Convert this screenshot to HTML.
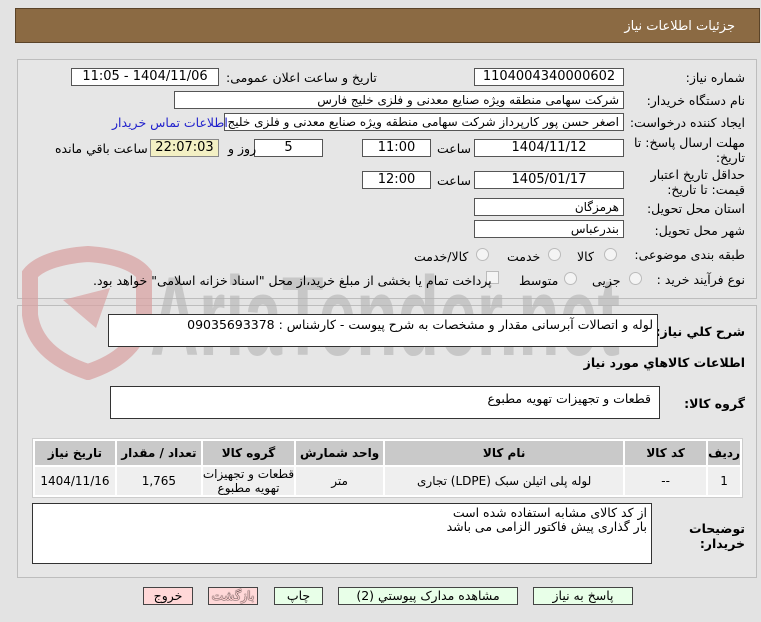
<!DOCTYPE html>
<html><head><meta charset="utf-8">
<style>
*{box-sizing:border-box;margin:0;padding:0}
body{width:761px;height:622px;background:#e3e3e3;font-family:Tahoma,"DejaVu Sans","Liberation Sans",sans-serif;font-size:12px;color:#000;position:relative;overflow:hidden;direction:rtl}
.a{position:absolute;white-space:nowrap}
.hdr{left:15px;top:8px;width:745px;height:35px;background:#8b6a43;border:1px solid #5a4328}
.hdr span{position:absolute;right:24px;top:10px;color:#fff;font-size:13px}
.pn{border:1px solid #bdbdbd;background:#e6e6e6}
.in{background:#fff;border:1px solid #555;height:18px;line-height:16px;padding:0 4px;font-size:12px;overflow:hidden}
.c{text-align:center;font-size:13px}
.lb{font-size:12.5px}
.ta{background:#fff;border:1px solid #333;padding:2px 4px;font-size:12.5px}
.rad{width:13px;height:13px;border-radius:50%;border:1px solid #bbb;background:#f4f4f4}
table{border-collapse:separate;border-spacing:2px;background:#fff;border:1px solid #ccc}
td,th{text-align:center;font-size:12px}
th{background:#c9c9c9;height:24px;font-weight:bold}
td{background:#efefef;height:28px}
.b{height:18px;border:1px solid #444;text-align:center;line-height:16px;font-size:12.5px}
.g{background:#e8ffe8}.p{background:#ffd8d8}
</style></head><body>
<div class="a hdr"><span>جزئيات اطلاعات نياز</span></div>
<div class="a pn" style="left:17px;top:59px;width:740px;height:240px"></div>
<div class="a pn" style="left:17px;top:305px;width:740px;height:273px"></div>

<!-- watermark -->
<svg class="a" style="left:18px;top:240px" width="640" height="140" viewBox="0 0 640 140">
<path d="M70 14 C40 16 20 24 12 34 L12 75 C16 105 40 122 70 132 C100 122 122 105 126 75 L126 34 C118 24 100 16 70 14 Z" fill="none" stroke="#d8a3a3" stroke-width="16" opacity="0.75"/>
<path d="M45 60 L92 48 L78 88 Z" fill="#d8a3a3" opacity="0.7"/>
<text x="132" y="115" font-family="Liberation Sans,sans-serif" font-weight="bold" font-size="112" fill="#b4b4b4" opacity="0.6" direction="ltr" textLength="470" lengthAdjust="spacingAndGlyphs">AriaTender.net</text>
</svg>

<div class="a lb" style="right:16px;top:70px">شماره نیاز:</div>
<div class="a in c" style="left:474px;top:68px;width:150px">1104004340000602</div>
<div class="a lb" style="left:226px;top:70px">تاریخ و ساعت اعلان عمومی:</div>
<div class="a in c" style="left:71px;top:68px;width:148px">1404/11/06 - 11:05</div>

<div class="a lb" style="right:16px;top:93px">نام دستگاه خریدار:</div>
<div class="a in" style="left:174px;top:91px;width:450px">شرکت سهامی منطقه ویژه صنایع معدنی و فلزی خلیج فارس</div>

<div class="a lb" style="right:16px;top:115px">ایجاد کننده درخواست:</div>
<div class="a in" style="left:224px;top:113px;width:400px">اصغر حسن پور کارپرداز شرکت سهامی منطقه ویژه صنایع معدنی و فلزی خلیج فارس</div>
<div class="a lb" style="left:112px;top:115px;color:#2222cc">اطلاعات تماس خریدار</div>

<div class="a lb" style="right:16px;top:135px;line-height:15px;text-align:right">مهلت ارسال پاسخ: تا<br>تاریخ:</div>
<div class="a in c" style="left:474px;top:139px;width:150px">1404/11/12</div>
<div class="a lb" style="left:437px;top:141px">ساعت</div>
<div class="a in c" style="left:362px;top:139px;width:69px">11:00</div>
<div class="a in c" style="left:254px;top:139px;width:69px">5</div>
<div class="a lb" style="left:228px;top:141px">روز و</div>
<div class="a in c" style="left:150px;top:139px;width:69px;background:#f3f0c4;border-color:#888">22:07:03</div>
<div class="a lb" style="left:55px;top:141px">ساعت باقي مانده</div>

<div class="a lb" style="right:16px;top:167px;line-height:15px;text-align:right">حداقل تاریخ اعتبار<br>قیمت: تا تاریخ:</div>
<div class="a in c" style="left:474px;top:171px;width:150px">1405/01/17</div>
<div class="a lb" style="left:437px;top:173px">ساعت</div>
<div class="a in c" style="left:362px;top:171px;width:69px">12:00</div>

<div class="a lb" style="right:16px;top:201px">استان محل تحویل:</div>
<div class="a in" style="left:474px;top:198px;width:150px">هرمزگان</div>
<div class="a lb" style="right:16px;top:223px">شهر محل تحویل:</div>
<div class="a in" style="left:474px;top:220px;width:150px">بندرعباس</div>

<div class="a lb" style="right:16px;top:247px">طبقه بندی موضوعی:</div>
<div class="a rad" style="left:604px;top:248px"></div><div class="a lb" style="left:577px;top:249px">کالا</div>
<div class="a rad" style="left:548px;top:248px"></div><div class="a lb" style="left:507px;top:249px">خدمت</div>
<div class="a rad" style="left:476px;top:248px"></div><div class="a lb" style="left:414px;top:249px">کالا/خدمت</div>

<div class="a lb" style="right:16px;top:272px">نوع فرآیند خرید :</div>
<div class="a rad" style="left:629px;top:272px"></div><div class="a lb" style="left:592px;top:273px">جزیی</div>
<div class="a rad" style="left:564px;top:272px"></div><div class="a lb" style="left:519px;top:273px">متوسط</div>
<div class="a" style="left:486px;top:271px;width:13px;height:13px;border:1px solid #bbb;background:#f4f4f4"></div>
<div class="a lb" style="left:93px;top:273px">پرداخت تمام یا بخشی از مبلغ خرید،از محل "اسناد خزانه اسلامی" خواهد بود.</div>

<div class="a" style="right:16px;top:324px;font-weight:bold;font-size:12.5px">شرح کلي نياز:</div>
<div class="a ta" style="left:108px;top:314px;width:550px;height:33px">لوله و اتصالات آبرسانی مقدار و مشخصات به شرح پیوست - کارشناس : 09035693378</div>
<div class="a" style="right:16px;top:355px;font-weight:bold;font-size:12.5px">اطلاعات کالاهاي مورد نياز</div>
<div class="a" style="right:16px;top:396px;font-weight:bold;font-size:12.5px">گروه کالا:</div>
<div class="a ta" style="left:110px;top:386px;width:550px;height:33px;padding:4px 8px">قطعات و تجهیزات تهویه مطبوع</div>

<table class="a" style="left:32px;top:438px;width:711px">
<tr><th style="width:27px">رديف</th><th style="width:81px">کد کالا</th><th style="width:238px">نام کالا</th><th style="width:87px">واحد شمارش</th><th style="width:87px">گروه کالا</th><th style="width:84px">تعداد / مقدار</th><th>تاریخ نیاز</th></tr>
<tr><td>1</td><td>--</td><td>لوله پلی اتیلن سبک (LDPE) تجاری</td><td>متر</td><td style="line-height:14px">قطعات و تجهیزات<br>تهویه مطبوع</td><td>1,765</td><td>1404/11/16</td></tr>
</table>

<div class="a" style="right:16px;top:521px;font-weight:bold;font-size:12.5px;line-height:15px;text-align:right">توضیحات<br>خریدار:</div>
<div class="a ta" style="left:32px;top:503px;width:620px;height:61px;line-height:14px">از کد کالای مشابه استفاده شده است<br>بار گذاری پیش فاکتور الزامی می باشد</div>

<div class="a b g" style="left:533px;top:587px;width:100px">پاسخ به نیاز</div>
<div class="a b g" style="left:338px;top:587px;width:180px">مشاهده مدارک پیوستي (2)</div>
<div class="a b g" style="left:274px;top:587px;width:49px">چاپ</div>
<div class="a b p" style="left:208px;top:587px;width:50px;color:#ffd0d0;text-shadow:0 0 1px #000,0 0 1px #000">بازگشت</div>
<div class="a b p" style="left:143px;top:587px;width:50px">خروج</div>
</body></html>
